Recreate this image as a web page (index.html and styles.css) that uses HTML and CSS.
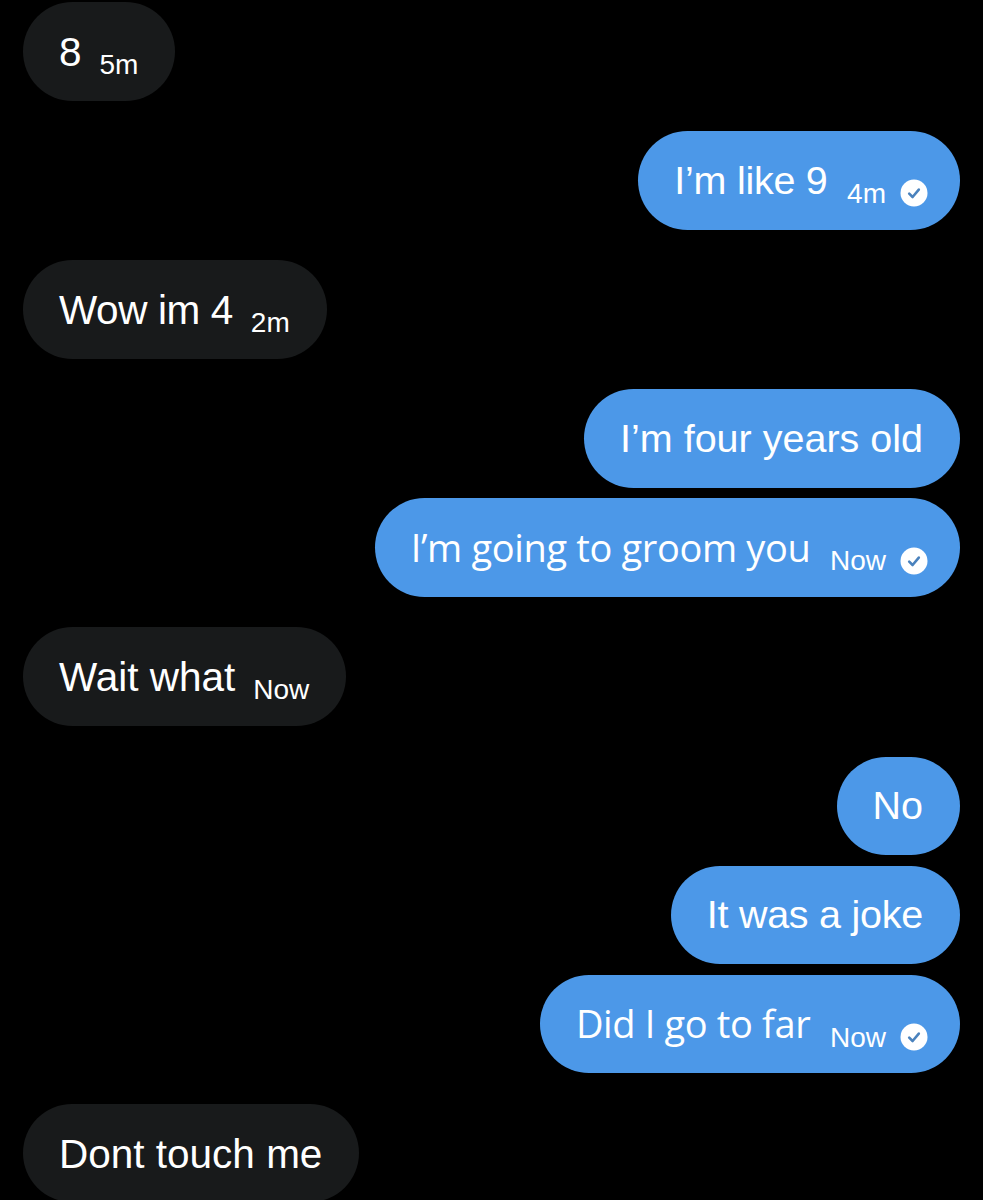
FILE: index.html
```html
<!DOCTYPE html>
<html lang="en">
<head>
<meta charset="utf-8">
<title>Messages</title>
<link rel="stylesheet" href="styles.css">
</head>
<body>
<svg class="defs" width="0" height="0" aria-hidden="true">
  <symbol id="seen" viewBox="0 0 28 28">
    <circle cx="14" cy="14" r="13.5" fill="#fff"/>
    <path d="M9.2 14.6l3.4 3.4 6.2-7.4" fill="none" stroke="#4a82bd" stroke-width="2.6" stroke-linecap="round" stroke-linejoin="round"/>
  </symbol>
</svg>
<main class="chat">
  <div class="row in first"><div class="bubble"><span class="txt">8</span><span class="time">5m</span></div></div>
  <div class="row out r1"><div class="bubble"><span class="txt tight">I’m like 9</span><span class="time">4m</span><svg class="seen"><use href="#seen"/></svg></div></div>
  <div class="row in r1"><div class="bubble"><span class="txt snug">Wow im 4</span><span class="time">2m</span></div></div>
  <div class="row out r1"><div class="bubble"><span class="txt">I’m four years old</span></div></div>
  <div class="row out r3"><div class="bubble"><span class="txt humanist">I’m going to groom you</span><span class="time">Now</span><svg class="seen"><use href="#seen"/></svg></div></div>
  <div class="row in r1"><div class="bubble"><span class="txt">Wait what</span><span class="time">Now</span></div></div>
  <div class="row out r1"><div class="bubble"><span class="txt">No</span></div></div>
  <div class="row out r3"><div class="bubble"><span class="txt tight">It was a joke</span></div></div>
  <div class="row out r3"><div class="bubble"><span class="txt humanist">Did I go to far</span><span class="time">Now</span><svg class="seen"><use href="#seen"/></svg></div></div>
  <div class="row in r1"><div class="bubble"><span class="txt">Dont touch me</span></div></div>
</main>
</body>
</html>
```
FILE: styles.css
```css
html, body {
  margin: 0;
  padding: 0;
  background: #000;
}
body {
  height: 1200px;
  overflow: hidden;
  font-family: "Liberation Sans", Arial, sans-serif;
  color: #fff;
}
.defs { position: absolute; }
.chat {
  display: flex;
  flex-direction: column;
  padding: 2px 23px 0;
}
.row { display: flex; }
.row.in { justify-content: flex-start; }
.row.out { justify-content: flex-end; }
.r1 { margin-top: 30.5px; }
.r3 { margin-top: 10.5px; }
.bubble {
  height: 98.6px;
  box-sizing: border-box;
  border-radius: 50px;
  padding: 0 37px 0 36px;
  display: flex;
  align-items: center;
}
.in .bubble { background: #181a1b; }
.out .bubble { background: #4c98e8; }
.txt {
  font-size: 39.5px;
  white-space: nowrap;
}
.in .txt {
  font-size: 40.5px;
  margin-top: 2px;
}
.txt.tight { letter-spacing: -0.25px; }
.txt.snug { letter-spacing: -0.4px; }
.txt.humanist {
  font-family: "Open Sans", "Liberation Sans", sans-serif;
  font-size: 38px;
  letter-spacing: -0.35px;
  margin-top: -2px;
}
.time {
  font-size: 28px;
  margin: 27px 0 0 18px;
  white-space: nowrap;
}
.out .time { margin-left: 19.5px; }
.seen {
  width: 28px;
  height: 28px;
  margin: 26px -5px 0 14px;
}
```
